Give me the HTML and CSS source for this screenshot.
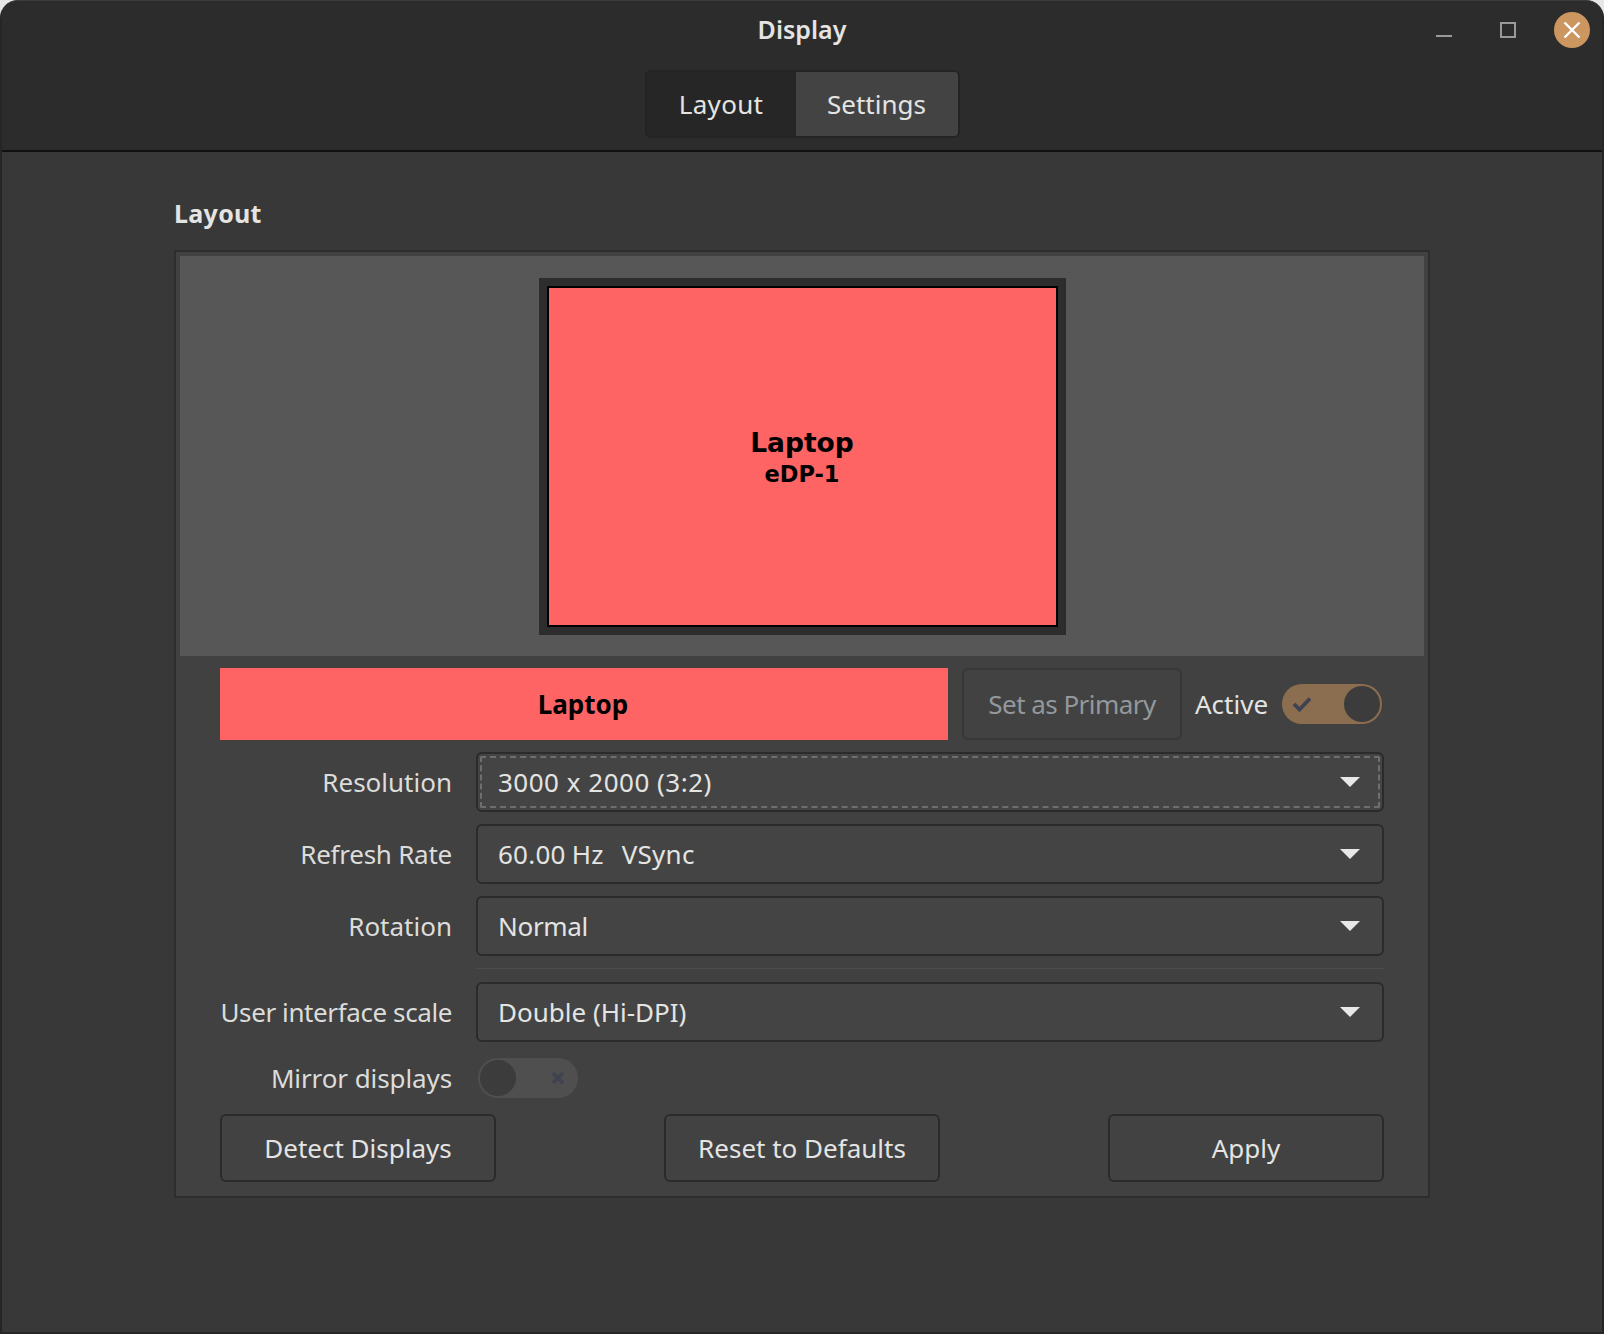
FILE: index.html
```html
<!DOCTYPE html>
<html>
<head>
	<meta charset="utf-8">
	<title>Display</title>
	<link rel="stylesheet" href="styles.css">
</head>
<body>
	<div class="frame">
		<div class="window">
			<div class="header">
				<div class="titlebar">
					<div class="title">Display</div>
					<div class="wm-buttons">
						<svg class="wm-min" width="18" height="4" viewBox="0 0 18 4"><rect x="1" y="1" width="16" height="2" fill="#9a9a9a"/></svg>
						<svg class="wm-max" width="18" height="18" viewBox="0 0 18 18"><rect x="2" y="2" width="14" height="14" fill="none" stroke="#9a9a9a" stroke-width="2"/></svg>
						<svg class="wm-close" width="36" height="36" viewBox="0 0 36 36"><circle cx="18" cy="18" r="18" fill="#cb9660"/><path d="M10.5 10.5 L25.5 25.5 M25.5 10.5 L10.5 25.5" stroke="#fff" stroke-width="2.4"/></svg>
					</div>
				</div>
				<div class="tabs">
					<div class="tab tab-active">Layout</div>
					<div class="tab">Settings</div>
				</div>
			</div>

			<div class="content">
				<h2>Layout</h2>
				<div class="panel">
					<div class="preview">
						<div class="monitor">
							<div class="screen">
								<div class="screen-name">Laptop</div>
								<div class="screen-port">eDP-1</div>
							</div>
						</div>
					</div>

					<div class="controls">
						<div class="output-row">
							<div class="output-name">Laptop</div>
							<div class="btn btn-primary">Set as Primary</div>
							<div class="active-label">Active</div>
							<div class="switch switch-on">
								<svg class="switch-icon" width="20" height="16" viewBox="0 0 20 16"><path d="M2 8 L7.5 13.5 L18 2.5" fill="none" stroke="#3f4250" stroke-width="3.8"/></svg>
								<div class="knob"></div>
							</div>
						</div>

						<div class="form">
							<label>Resolution</label>
							<div class="combo combo-focus">
								<div class="combo-focus-line"><span>3000 x 2000 (3:2)</span><div class="arrow"></div></div>
							</div>
							<label class="label-tight">Refresh Rate</label>
							<div class="combo"><span class="wide">60.00 Hz&nbsp;&nbsp;&nbsp;VSync</span><div class="arrow"></div></div>
							<label>Rotation</label>
							<div class="combo"><span class="narrow">Normal</span><div class="arrow"></div></div>
							<div class="separator"></div>
							<label class="label-scale">User interface scale</label>
							<div class="combo"><span>Double (Hi-DPI)</span><div class="arrow"></div></div>
							<label class="label-mirror">Mirror displays</label>
							<div class="switch switch-off">
								<div class="knob"></div>
								<svg class="switch-icon" width="14" height="14" viewBox="0 0 14 14"><path d="M2 2 L12 12 M12 2 L2 12" stroke="#3f4250" stroke-width="3.2"/></svg>
							</div>
						</div>

						<div class="actions">
							<div class="btn">Detect Displays</div>
							<div class="btn">Reset to Defaults</div>
							<div class="btn">Apply</div>
						</div>
					</div>
				</div>
			</div>
		</div>
	</div>
</body>
</html>
```

FILE: styles.css
```css
html, body {
	margin: 0;
	height: 100%;
	background: #e6e6e6;
}

body {
	font-family: "Noto Sans", "Open Sans", sans-serif;
	font-size: 26px;
	color: #e4e4e2;
	overflow: hidden;
}

.frame {
	box-sizing: border-box;
	height: 1334px;
	padding: 0 2px 2px;
	background: #262626;
	border-top: 1px solid #3b3b3b;
	border-radius: 18px 18px 0 0;
}

.window {
	height: 1331px;
	background: #383838;
	border-radius: 16px 16px 0 0;
	overflow: hidden;
}

.header {
	box-sizing: border-box;
	height: 151px;
	background: #2c2c2c;
	border-bottom: 2px solid #111;
	padding-top: 11px;
}

.titlebar {
	display: grid;
	grid-template-columns: 1fr auto 1fr;
	align-items: center;
	height: 36px;
	margin-bottom: 22px;
}

.title {
	grid-column: 2;
	font-weight: 600;
	font-size: 25px;
	margin-top: -2px;
}

.wm-buttons {
	grid-column: 3;
	display: flex;
	align-items: center;
	justify-content: flex-end;
	padding-right: 12px;
}

.wm-min {
	margin-top: 12px;
	margin-right: 46px;
}

.wm-max {
	margin-right: 37px;
}

.tabs {
	display: flex;
	width: 315px;
	height: 68px;
	margin: 0 auto;
	box-sizing: border-box;
	border: 2px solid #232323;
	border-radius: 6px;
	overflow: hidden;
}

.tab {
	box-sizing: border-box;
	display: flex;
	align-items: center;
	justify-content: center;
	width: 162px;
	background: #434343;
}

.tab-active {
	width: 149px;
	background: #262626;
	letter-spacing: 0.3px;
}

.content {
	padding: 42px 172px 0;
}

h2 {
	margin: 0 0 17px;
	height: 39px;
	line-height: 39px;
	font-size: 25px;
	font-weight: 700;
	letter-spacing: 0.3px;
}

.panel {
	box-sizing: border-box;
	height: 948px;
	padding: 4px;
	background: #414141;
	border: 2px solid #2e2e2e;
}

.preview {
	display: flex;
	justify-content: center;
	align-items: center;
	height: 400px;
	background: #575757;
}

.monitor {
	box-sizing: border-box;
	width: 527px;
	height: 357px;
	border: 8px solid #2d2d2d;
}

.screen {
	box-sizing: border-box;
	height: 100%;
	display: flex;
	flex-direction: column;
	justify-content: center;
	align-items: center;
	padding-top: 2px;
	background: #ff6464;
	border: 2px solid #000;
	font-family: "DejaVu Sans", sans-serif;
	font-weight: 700;
	color: #000;
}

.screen-name {
	font-size: 26.5px;
	line-height: 33px;
}

.screen-port {
	font-size: 22.5px;
	line-height: 30px;
}

.controls {
	padding: 12px 40px 0;
}

.output-row {
	display: flex;
	align-items: center;
	height: 72px;
}

.output-name {
	box-sizing: border-box;
	display: flex;
	align-items: center;
	justify-content: center;
	width: 728px;
	height: 72px;
	margin-right: 14px;
	padding-right: 2px;
	background: #ff6464;
	color: #000;
	font-weight: 700;
}

.btn {
	box-sizing: border-box;
	display: flex;
	align-items: center;
	justify-content: center;
	width: 276px;
	height: 68px;
	background: #424242;
	border: 2px solid #2b2b2b;
	border-radius: 6px;
}

.btn-primary {
	width: 220px;
	height: 72px;
	margin-right: 13px;
	color: #93989c;
	border-color: #373737;
	letter-spacing: -0.55px;
}

.active-label {
	margin-right: 14px;
}

.switch {
	box-sizing: border-box;
	display: flex;
	align-items: center;
	justify-content: space-between;
	width: 100px;
	height: 40px;
	border-radius: 20px;
}

.switch-on {
	background: #8b6d4f;
	padding: 0 2px 0 10px;
}

.switch-off {
	justify-self: start;
	margin: 4px 0 3px 2px;
	background: #4f4f4f;
	padding: 0 13px 0 2px;
}

.knob {
	width: 36px;
	height: 36px;
	border-radius: 50%;
	background: #3c3c3c;
}

.form {
	display: grid;
	grid-template-columns: 232px 908px;
	column-gap: 24px;
	row-gap: 12px;
	align-items: center;
	margin-top: 12px;
}

label {
	text-align: right;
	white-space: nowrap;
	color: #dcdcda;
}

.label-tight {
	letter-spacing: -0.25px;
}

.label-scale {
	letter-spacing: -0.4px;
}

.label-mirror {
	letter-spacing: -0.1px;
}

.combo {
	box-sizing: border-box;
	display: flex;
	align-items: center;
	justify-content: space-between;
	height: 60px;
	padding: 0 22px 0 20px;
	background: #444;
	border: 2px solid #2b2b2b;
	border-radius: 6px;
}

.wide {
	letter-spacing: 0.25px;
	word-spacing: -1px;
}

.narrow {
	letter-spacing: -0.3px;
}

.combo-focus {
	padding: 2px;
}

.combo-focus-line {
	box-sizing: border-box;
	display: flex;
	align-items: center;
	justify-content: space-between;
	width: 100%;
	height: 100%;
	padding: 0 18px 0 16px;
	border: 2px dashed #6e6e6e;
	border-radius: 2px;
	letter-spacing: 0.5px;
}

.arrow {
	width: 0;
	height: 0;
	border-left: 10px solid transparent;
	border-right: 10px solid transparent;
	border-top: 10px solid #e8e8e8;
}

.separator {
	grid-column: 2;
	height: 1px;
	margin-bottom: 1px;
	background: #4d4d4d;
}

.actions {
	display: flex;
	justify-content: space-between;
	margin-top: 13px;
}
```
